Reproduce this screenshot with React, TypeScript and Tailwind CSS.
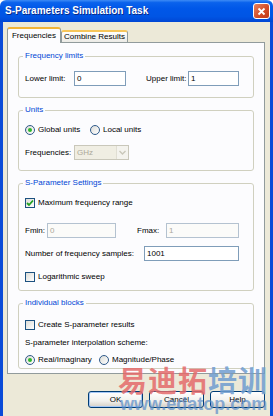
import type { ReactNode } from "react";

const UI_FONT = "font-['Liberation_Sans',Arial,sans-serif]";

function Group({ title, className, children }: { title: string; className?: string; children: ReactNode }) {
  return (
    <div className={`relative mx-[10px] rounded-[3px] border border-[#D0D0BF] px-[6px] ${className ?? ""}`}>
      <span className="absolute left-[4px] top-[-7px] bg-[#FCFCFE] px-[2px] leading-[12px] text-[#0046D5]">
        {title}
      </span>
      {children}
    </div>
  );
}

function TextBox({ value, width, disabled }: { value: string; width: string; disabled?: boolean }) {
  return (
    <div
      className={`flex h-[15px] items-center border px-[2px] ${width} ${
        disabled ? "border-[#B4C2D0] bg-[#FBFBF9] text-[#ACA899]" : "border-[#7F9DB9] bg-white text-black"
      }`}
    >
      {value}
    </div>
  );
}

function CheckBox({ checked, label }: { checked?: boolean; label: string }) {
  return (
    <div className="flex h-[12px] items-center">
      <span className="flex h-[10px] w-[10px] items-center justify-center border border-[#1C5180] bg-[linear-gradient(135deg,#DCDCD7,#FFFFFF)]">
        {checked && (
          <svg width="8" height="8" viewBox="0 0 8 8">
            <path d="M1 4 L3 6 L7 1.5" fill="none" stroke="#21A121" strokeWidth="1.8" />
          </svg>
        )}
      </span>
      <span className="ml-[3px]">{label}</span>
    </div>
  );
}

function Radio({ checked, label, width }: { checked?: boolean; label: string; width?: string }) {
  return (
    <div className={`flex h-[12px] items-center ${width ?? ""}`}>
      <span className="flex h-[10px] w-[10px] items-center justify-center rounded-full border border-[#2F5A8A] bg-[linear-gradient(135deg,#DCDCD7,#FFFFFF)]">
        {checked && <span className="h-[4px] w-[4px] rounded-full bg-[#2DB82D]" />}
      </span>
      <span className="ml-[3px]">{label}</span>
    </div>
  );
}

function Button({ label, isDefault }: { label: string; isDefault?: boolean }) {
  return (
    <div
      className={`flex h-[17px] w-[55px] items-center justify-center rounded-[3px] border border-[#003C74] bg-[linear-gradient(180deg,#FFFFFF,#F2F1EC_60%,#D6D0C5)] ${
        isDefault ? "shadow-[inset_0_0_0_1px_#A6C8F6]" : ""
      }`}
    >
      {label}
    </div>
  );
}

export default function App() {
  return (
    <div className={`relative flex h-[416px] w-[273px] flex-col overflow-hidden whitespace-nowrap text-[8px] leading-[12px] text-black ${UI_FONT}`}>
      {/* title bar */}
      <div className="flex h-[22px] shrink-0 items-center rounded-t-[6px] bg-[linear-gradient(180deg,#3D8BF5_0%,#0A62EC_12%,#0057E8_40%,#0055E4_75%,#0046D4_100%)] pl-[5px] pr-[3px]">
        <span className="text-[10px] font-bold text-white [text-shadow:1px_1px_0_#0A2B8A]">
          S-Parameters Simulation Task
        </span>
        <div className="ml-auto flex h-[16px] w-[17px] items-center justify-center rounded-[3px] border border-white bg-[linear-gradient(135deg,#E9815E,#D24A25_60%,#C13A17)]">
          <svg width="9" height="9" viewBox="0 0 9 9">
            <path d="M1.5 1.5 L7.5 7.5 M7.5 1.5 L1.5 7.5" stroke="white" strokeWidth="1.8" />
          </svg>
        </div>
      </div>

      {/* window body */}
      <div className="flex flex-1 flex-col border-x-[3px] border-[#0A4BD8] bg-[#ECE9D8]">
        {/* tabs */}
        <div className="flex h-[20px] items-end pl-[4px]">
          <div className="relative z-10 -mb-[1px] flex h-[16px] w-[54px] items-start justify-center rounded-t-[3px] border-x border-t-[2px] border-x-[#919B9C] border-t-[#F2B438] bg-[#FCFCFE] pt-[1px]">
            Frequencies
          </div>
          <div className="flex h-[12px] w-[67px] items-center justify-center rounded-t-[3px] border-x border-t-[2px] border-x-[#919B9C] border-t-[#F7C65A] bg-[linear-gradient(180deg,#FFFFFF,#ECEBE6)]">
            Combine Results
          </div>
        </div>

        {/* panel */}
        <div className="ml-[4px] flex h-[332px] w-[258px] flex-col border border-[#919B9C] bg-[#FCFCFE] pt-[13px]">
          <Group title="Frequency limits" className="h-[42px] pt-[14px]">
            <div className="flex h-[15px] items-center">
              <span className="w-[49px]">Lower limit:</span>
              <TextBox value="0" width="w-[52px]" />
              <span className="ml-[20px] w-[42px]">Upper limit:</span>
              <TextBox value="1" width="w-[51px]" />
            </div>
          </Group>

          <Group title="Units" className="mt-[12px] h-[61px] pt-[13px]">
            <div className="flex">
              <Radio checked label="Global units" width="w-[65px]" />
              <Radio label="Local units" />
            </div>
            <div className="mt-[9px] flex h-[15px] items-center">
              <span className="w-[49px]">Frequencies:</span>
              <div className="flex h-[15px] w-[55px] items-center border border-[#C9C7BA] bg-[#F0EEE3] text-[#ACA899]">
                <span className="flex-1 pl-[2px]">GHz</span>
                <span className="flex h-[13px] w-[12px] items-center justify-center border-l border-[#E0DED3] bg-[#F4F3EE]">
                  <svg width="7" height="5" viewBox="0 0 7 5">
                    <path d="M0.5 1 L3.5 4 L6.5 1" fill="none" stroke="#C9C7BA" strokeWidth="1.4" />
                  </svg>
                </span>
              </div>
            </div>
          </Group>

          <Group title="S-Parameter Settings" className="mt-[12px] h-[108px] pt-[13px]">
            <CheckBox checked label="Maximum frequency range" />
            <div className="mt-[14px] flex h-[15px] items-center">
              <span className="w-[22px]">Fmin:</span>
              <TextBox value="0" width="w-[69px]" disabled />
              <span className="ml-[21px] w-[29px]">Fmax:</span>
              <TextBox value="1" width="w-[73px]" disabled />
            </div>
            <div className="mt-[8px] flex h-[15px] items-center">
              <span className="w-[119px]">Number of frequency samples:</span>
              <TextBox value="1001" width="w-[95px]" />
            </div>
            <div className="mt-[10px]">
              <CheckBox label="Logarithmic sweep" />
            </div>
          </Group>

          <Group title="Individual blocks" className="mt-[12px] h-[66px] pt-[15px]">
            <CheckBox label="Create S-parameter results" />
            <div className="mt-[6px] flex h-[12px] items-center">S-parameter interpolation scheme:</div>
            <div className="mt-[5px] flex">
              <Radio checked label="Real/Imaginary" width="w-[74px]" />
              <Radio label="Magnitude/Phase" />
            </div>
          </Group>
        </div>

        {/* buttons */}
        <div className="mr-[5px] mt-[17px] flex justify-end gap-[6px]">
          <Button label="OK" isDefault />
          <Button label="Cancel" />
          <Button label="Help" />
        </div>
      </div>

      {/* watermark */}
      <div className="pointer-events-none absolute left-[118px] top-[364px] flex flex-col items-start">
        <div className="font-['Noto_Sans_CJK_SC',sans-serif] text-[29px] font-bold leading-[30px] tracking-[1px]">
          <span className="text-[#E46A6A]/85">易迪拓</span>
          <span className="text-[#6F9CD0]/85">培训</span>
        </div>
        <div className="ml-[2px] font-['Liberation_Sans',sans-serif] text-[18px] font-bold leading-[20px] text-[#5A8CC8]/70">
          www.edatop.com
        </div>
      </div>
    </div>
  );
}
